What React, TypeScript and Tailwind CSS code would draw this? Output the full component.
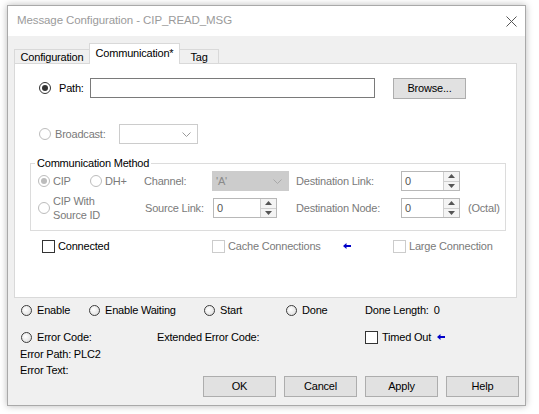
import React from "react";

const F = "font-['Liberation_Sans',Arial,sans-serif] text-[11px] tracking-[-0.2px]";

function Radio({ checked = false, disabled = false }: { checked?: boolean; disabled?: boolean }) {
  return (
    <span
      className={`flex h-[12px] w-[12px] shrink-0 items-center justify-center rounded-full border bg-white ${
        disabled ? "border-[#bcbcbc]" : "border-[#333333]"
      }`}
    >
      {checked && (
        <span className={`h-[6px] w-[6px] rounded-full ${disabled ? "bg-[#bcbcbc]" : "bg-[#333333]"}`} />
      )}
    </span>
  );
}

function Led() {
  return (
    <span className="h-[11px] w-[11px] shrink-0 rounded-full border border-[#3c3c3c] bg-[radial-gradient(circle_at_40%_40%,#ffffff,#d8d8d8)]" />
  );
}

function Check({ disabled = false }: { disabled?: boolean }) {
  return (
    <span
      className={`h-[13px] w-[13px] shrink-0 border bg-white ${disabled ? "border-[#cccccc]" : "border-[#333333]"}`}
    />
  );
}

function BlueArrow() {
  return (
    <svg width="8" height="6" viewBox="0 0 8 6" className="shrink-0">
      <path d="M0 3 L3.5 0 L3.5 2 L8 2 L8 4 L3.5 4 L3.5 6 Z" fill="#0000c8" />
    </svg>
  );
}

function Chevron({ color }: { color: string }) {
  return (
    <svg width="9" height="5" viewBox="0 0 9 5">
      <path d="M0.5 0.5 L4.5 4.5 L8.5 0.5" stroke={color} strokeWidth="1" fill="none" />
    </svg>
  );
}

function Spin({ w }: { w: string }) {
  return (
    <div className={`flex h-[20px] ${w} border border-[#b8b8b8] bg-white`}>
      <div className="flex flex-1 items-center pl-[3px] text-[#555555]">0</div>
      <div className="flex w-[16px] flex-col border-l border-[#cfcfcf] bg-[#f4f4f4]">
        <div className="flex flex-1 items-center justify-center border-b border-[#cfcfcf]">
          <svg width="7" height="4" viewBox="0 0 7 4">
            <path d="M0 4 L3.5 0 L7 4 Z" fill="#555555" />
          </svg>
        </div>
        <div className="flex flex-1 items-center justify-center">
          <svg width="7" height="4" viewBox="0 0 7 4">
            <path d="M0 0 L3.5 4 L7 0 Z" fill="#555555" />
          </svg>
        </div>
      </div>
    </div>
  );
}

function Btn({ label }: { label: string }) {
  return (
    <div className="flex h-[21px] w-[73px] items-center justify-center border border-[#adadad] bg-[#e1e1e1] text-black">
      {label}
    </div>
  );
}

export default function App() {
  const gray = "text-[#7a7a7a]";
  return (
    <div className={`h-[414px] w-[539px] bg-white pl-[7px] pt-[5px] ${F}`}>
      <div className="flex h-[401px] w-[519px] flex-col border border-[#a9a9a9] bg-[#f0f0f0] shadow-[0_0_7px_rgba(0,0,0,0.28)]">
        {/* title bar */}
        <div className="flex h-[30px] shrink-0 items-center justify-between bg-white pl-[9px] pr-[8px]">
          <span className="text-[11.5px] tracking-[-0.1px] text-[#9b9b9b]">Message Configuration - CIP_READ_MSG</span>
          <svg width="11" height="11" viewBox="0 0 11 11">
            <path d="M0.5 0.5 L10.5 10.5 M10.5 0.5 L0.5 10.5" stroke="#555555" strokeWidth="1" />
          </svg>
        </div>

        {/* body */}
        <div className="flex flex-1 flex-col pt-[7px] text-black">
          {/* tabs */}
          <div className="flex h-[20px] items-end pl-[6px]">
            <div className="flex h-[14px] w-[75px] items-center justify-center border-l border-t border-[#d9d9d9] bg-[#f0f0f0] pt-[1px]">
              Configuration
            </div>
            <div className="relative z-10 -mb-px flex h-[21px] w-[91px] items-start justify-center border-l border-r border-t border-[#d9d9d9] bg-white pt-[1px]">
              Communication*
            </div>
            <div className="flex h-[14px] w-[39px] items-center justify-center border-r border-t border-[#d9d9d9] bg-[#f0f0f0] pt-[1px]">
              Tag
            </div>
          </div>

          {/* panel */}
          <div className="ml-[6px] flex h-[235px] w-[503px] flex-col border border-[#d9d9d9] bg-white">
            {/* path row */}
            <div className="mt-[14px] flex h-[20px] items-center pl-[24px]">
              <Radio checked />
              <span className="ml-[8px] w-[31px]">Path:</span>
              <div className="h-[20px] w-[285px] border border-[#7a7a7a] bg-white" />
              <div className="ml-[18px]">
                <Btn label="Browse..." />
              </div>
            </div>

            {/* broadcast row */}
            <div className="mt-[26px] flex h-[20px] items-center pl-[24px]">
              <Radio disabled />
              <span className={`ml-[4px] w-[64px] ${gray}`}>Broadcast:</span>
              <div className="flex h-[20px] w-[79px] items-center justify-end border border-[#cccccc] bg-white pr-[6px]">
                <Chevron color="#9a9a9a" />
              </div>
            </div>

            {/* communication method */}
            <fieldset className="ml-[15px] mt-[12px] w-[476px] border border-[#dcdcdc] pb-[12px] pl-[7px]">
              <legend className="ml-[-3px] px-[2px] leading-[14px] text-black">Communication Method</legend>
              <div className="mt-[1px] flex h-[20px] items-center">
                <div className="flex w-[52px] items-center">
                  <Radio checked disabled />
                  <span className={`ml-[3px] ${gray}`}>CIP</span>
                </div>
                <div className="flex w-[54px] items-center">
                  <Radio disabled />
                  <span className={`ml-[3px] ${gray}`}>DH+</span>
                </div>
                <span className={`w-[68px] ${gray}`}>Channel:</span>
                <div className="flex h-[20px] w-[77px] items-center justify-between border border-[#cccccc] bg-[#cccccc] pl-[3px] pr-[6px]">
                  <span className="text-[#8a8a8a]">'A'</span>
                  <Chevron color="#a8a8a8" />
                </div>
                <span className="w-[7px]" />
                <span className={`w-[105px] ${gray}`}>Destination Link:</span>
                <Spin w="w-[59px]" />
              </div>
              <div className="mt-[7px] flex h-[20px] items-center">
                <div className="flex w-[107px] items-center">
                  <Radio disabled />
                  <span className={`ml-[3px] leading-[14px] ${gray}`}>
                    CIP With
                    <br />
                    Source ID
                  </span>
                </div>
                <span className={`w-[68px] ${gray}`}>Source Link:</span>
                <Spin w="w-[64px]" />
                <span className="w-[19px]" />
                <span className={`w-[105px] ${gray}`}>Destination Node:</span>
                <Spin w="w-[59px]" />
                <span className={`ml-[8px] ${gray}`}>(Octal)</span>
              </div>
            </fieldset>

            {/* connected row */}
            <div className="mt-[8px] flex h-[14px] items-center pl-[27px]">
              <div className="flex w-[170px] items-center">
                <Check />
                <span className="ml-[3px]">Connected</span>
              </div>
              <div className="flex w-[131px] items-center">
                <Check disabled />
                <span className={`ml-[3px] ${gray}`}>Cache Connections</span>
              </div>
              <div className="flex w-[50px] items-center">
                <BlueArrow />
              </div>
              <div className="flex items-center">
                <Check disabled />
                <span className={`ml-[3px] ${gray}`}>Large Connection</span>
              </div>
            </div>
          </div>

          {/* status row */}
          <div className="mt-[5px] flex h-[14px] items-center pl-[13px]">
            <div className="flex w-[68px] items-center">
              <Led />
              <span className="ml-[5px]">Enable</span>
            </div>
            <div className="flex w-[115px] items-center">
              <Led />
              <span className="ml-[5px]">Enable Waiting</span>
            </div>
            <div className="flex w-[82px] items-center">
              <Led />
              <span className="ml-[5px]">Start</span>
            </div>
            <div className="flex w-[79px] items-center">
              <Led />
              <span className="ml-[5px]">Done</span>
            </div>
            <div className="flex items-center">
              <span>Done Length:</span>
              <span className="ml-[5px]">0</span>
            </div>
          </div>

          {/* error row */}
          <div className="mt-[13px] flex h-[14px] items-center pl-[13px]">
            <div className="flex w-[136px] items-center">
              <Led />
              <span className="ml-[5px]">Error Code:</span>
            </div>
            <span className="w-[208px]">Extended Error Code:</span>
            <div className="flex items-center">
              <Check />
              <span className="ml-[4px]">Timed Out</span>
              <span className="ml-[6px] flex items-center">
                <BlueArrow />
              </span>
            </div>
          </div>

          {/* error path / text + buttons */}
          <div className="flex">
            <div className="mt-[2px] flex w-[195px] flex-col pl-[12px] leading-[16px]">
              <span>Error Path: PLC2</span>
              <span>Error Text:</span>
            </div>
            <div className="mt-[32px] flex gap-[8px]">
              <Btn label="OK" />
              <Btn label="Cancel" />
              <Btn label="Apply" />
              <Btn label="Help" />
            </div>
          </div>
        </div>
      </div>
    </div>
  );
}
